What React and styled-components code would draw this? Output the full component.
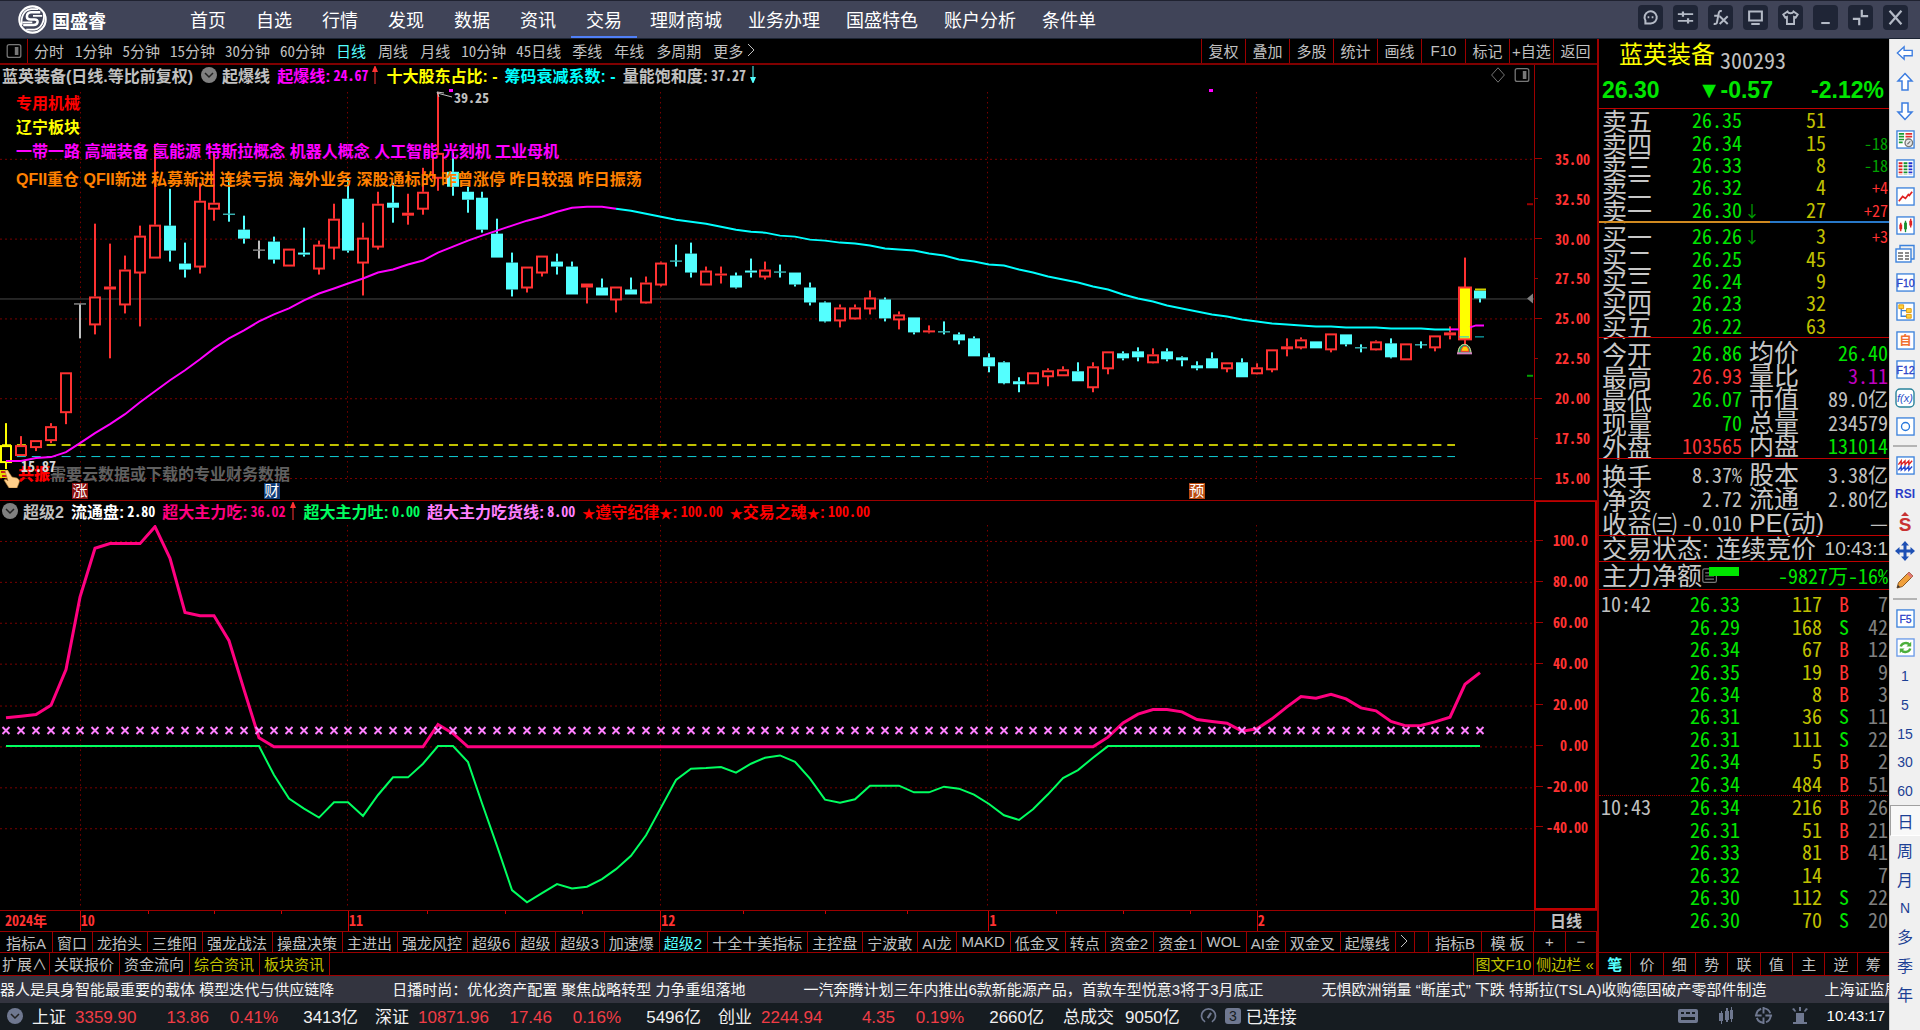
import React, { useState } from 'react';
import styled, { createGlobalStyle, css } from 'styled-components';

const SANS = '"Liberation Sans", "Noto Sans CJK SC", sans-serif';
const NARROW = '"Noto Sans Mono CJK SC", "Noto Sans CJK SC", sans-serif';

const RED_LINE = '#9c0000';
const RED = '#ff3232';
const CYAN = '#54ffff';
const GRAY = '#c0c0c0';
const GREEN = '#00e600';
const AMBER = '#c0c000';

const GlobalStyle = createGlobalStyle`
  * { box-sizing: border-box; }
  body { margin: 0; background: #000; font-family: ${SANS}; overflow: hidden; }
  button { font: inherit; color: inherit; background: none; border: 0; padding: 0; cursor: pointer; white-space: nowrap; }
  svg { display: block; }
`;

/* ---------- data ---------- */

const NAV = ['首页', '自选', '行情', '发现', '数据', '资讯', '交易', '理财商城', '业务办理', '国盛特色', '账户分析', '条件单'];
const PERIODS = ['分时', '1分钟', '5分钟', '15分钟', '30分钟', '60分钟', '日线', '周线', '月线', '10分钟', '45日线', '季线', '年线', '多周期', '更多'];
const TOOLS = ['复权', '叠加', '多股', '统计', '画线', 'F10', '标记', '+自选', '返回'];
const INDICATORS = ['窗口', '龙抬头', '三维阳', '强龙战法', '操盘决策', '主进出', '强龙风控', '超级6', '超级', '超级3', '加速爆', '超级2', '十全十美指标', '主控盘', '宁波敢', 'AI龙', 'MAKD', '低金叉', '转点', '资金2', '资金1', 'WOL', 'AI金', '双金叉', '起爆线'];
const SIDE_TABS = ['笔', '价', '细', '势', '联', '值', '主', '逆', '筹'];

const SELLS = [
  ['卖五', '26.35', '', '51', ''],
  ['卖四', '26.34', '', '15', '-18'],
  ['卖三', '26.33', '', '8', '-18'],
  ['卖二', '26.32', '', '4', '+4'],
  ['卖一', '26.30', '↓', '27', '+27'],
];
const BUYS = [
  ['买一', '26.26', '↓', '3', '+3'],
  ['买二', '26.25', '', '45', ''],
  ['买三', '26.24', '', '9', ''],
  ['买四', '26.23', '', '32', ''],
  ['买五', '26.22', '', '63', ''],
];

const STATS = [
  ['今开', '26.86', GREEN, '均价', '26.40', GREEN],
  ['最高', '26.93', RED, '量比', '3.11', '#c000c0'],
  ['最低', '26.07', GREEN, '市值', '89.0亿', GRAY],
  ['现量', '70', GREEN, '总量', '234579', GRAY],
  ['外盘', '103565', RED, '内盘', '131014', GREEN],
];
const STATS2 = [
  ['换手', '8.37%', GRAY, '股本', '3.38亿', GRAY],
  ['净资', '2.72', GRAY, '流通', '2.80亿', GRAY],
  ['收益㈢', '-0.010', GRAY, 'PE(动)', '—', GRAY],
];

const TRADES = [
  ['10:42', '26.33', 117, 'B', 7], ['', '26.29', 168, 'S', 42], ['', '26.34', 67, 'B', 12],
  ['', '26.35', 19, 'B', 9], ['', '26.34', 8, 'B', 3], ['', '26.31', 36, 'S', 11],
  ['', '26.31', 111, 'S', 22], ['', '26.34', 5, 'B', 2], ['', '26.34', 484, 'B', 51],
  ['10:43', '26.34', 216, 'B', 26], ['', '26.31', 51, 'B', 21], ['', '26.33', 81, 'B', 41],
  ['', '26.32', 14, '', 7], ['', '26.30', 112, 'S', 22], ['', '26.30', 70, 'S', 20],
];

// kind, high, body top, body bottom, low; 48 steps to one yuan, counted down from 33.73
const CANDLES = [
  ['y', 733, 798, 850, 870], ['r', 771, 798, 828, 828], ['r', 784, 784, 805, 815], ['r', 733, 742, 783, 792],
  ['r', 578, 578, 700, 735], ['w', 372, 372, 374, 476], ['r', 133, 352, 434, 465], ['r', 193, 321, 330, 537],
  ['r', 227, 270, 374, 402], ['r', 137, 169, 280, 440], ['r', -107, 135, 235, 235], ['c', 27, 137, 213, 245],
  ['c', 189, 253, 271, 293], ['r', 8, 63, 262, 282], ['r', -85, 68, 86, 122], ['c', -8, 101, 104, 125],
  ['c', 107, 149, 177, 192], ['w', 182, 210, 213, 237], ['c', 170, 185, 240, 251], ['r', 206, 206, 259, 259],
  ['c', 144, 220, 225, 230], ['r', 182, 194, 266, 286], ['r', 73, 116, 205, 241], ['c', -5, 58, 214, 218],
  ['r', 130, 175, 250, 349], ['r', 36, 71, 202, 210], ['c', 8, 69, 83, 129], ['r', 42, 100, 107, 136],
  ['r', -35, 37, 86, 104], ['r', -265, -80, -5, 33], ['c', -80, -24, 20, 48], ['c', 20, 37, 60, 98],
  ['c', 36, 55, 150, 158], ['c', 118, 163, 233, 233], ['c', 219, 250, 329, 352], ['r', 262, 262, 325, 338],
  ['r', 228, 228, 279, 292], ['c', 223, 246, 262, 286], ['c', 246, 262, 345, 345], ['r', 311, 311, 325, 372],
  ['c', 298, 324, 349, 349], ['r', 322, 322, 359, 398], ['c', 294, 329, 345, 345], ['r', 290, 310, 368, 372],
  ['r', 246, 250, 314, 322], ['c', 196, 243, 245, 260], ['c', 189, 223, 278, 293], ['r', 262, 272, 315, 315],
  ['r', 262, 281, 289, 312], ['c', 279, 287, 324, 327], ['c', 238, 273, 278, 294], ['r', 246, 269, 292, 300],
  ['c', 256, 276, 278, 294], ['c', 279, 279, 316, 320], ['c', 310, 324, 368, 377], ['c', 366, 370, 425, 429],
  ['r', 374, 384, 424, 443], ['r', 374, 384, 416, 420], ['r', 332, 355, 386, 406], ['c', 354, 361, 417, 425],
  ['r', 396, 406, 420, 451], ['c', 414, 414, 458, 466], ['r', 437, 454, 458, 462], ['c', 425, 455, 458, 466],
  ['c', 460, 466, 482, 496], ['c', 470, 478, 530, 530], ['c', 523, 534, 560, 578], ['c', 546, 549, 612, 616],
  ['c', 594, 605, 615, 639], ['r', 580, 580, 611, 611], ['r', 568, 573, 592, 620], ['r', 561, 570, 589, 589],
  ['c', 549, 576, 605, 605], ['r', 549, 562, 623, 638], ['r', 517, 517, 567, 586], ['c', 516, 523, 537, 542],
  ['c', 504, 516, 533, 545], ['r', 508, 524, 549, 552], ['c', 508, 516, 541, 545], ['c', 530, 535, 544, 560],
  ['c', 546, 557, 567, 572], ['c', 519, 538, 568, 568], ['r', 550, 550, 566, 578], ['c', 538, 550, 593, 593],
  ['r', 553, 565, 581, 585], ['r', 509, 509, 570, 578], ['r', 478, 502, 510, 530], ['r', 475, 480, 503, 510],
  ['c', 485, 487, 507, 507], ['r', 462, 462, 510, 518], ['c', 466, 466, 496, 500], ['c', 495, 505, 507, 518],
  ['r', 482, 487, 510, 512], ['c', 478, 493, 533, 536], ['r', 491, 491, 540, 540], ['c', 486, 494, 496, 508],
  ['r', 468, 468, 503, 515], ['r', 440, 460, 467, 480], ['hot', 235, 325, 479, 500], ['c', 332, 332, 357, 368],
];

// same scale as the candles
const AVERAGE = [
  847, 845, 838, 833, 818, 792, 762, 735, 704, 670, 637, 604, 573, 539, 507, 478, 452, 427, 404, 386,
  363, 343, 326, 311, 296, 280, 269, 254, 243, 218, 200, 182, 168, 153, 137, 122, 110, 96, 85, 80,
  80, 86, 94, 103, 111, 120, 127, 132, 142, 149, 156, 160, 168, 171, 179, 182, 190, 193, 198, 206,
  209, 212, 221, 228, 239, 247, 255, 258, 269, 279, 291, 299, 309, 320, 330, 346, 358, 366, 378, 386,
  396, 404, 411, 419, 427, 431, 434, 439, 440, 442, 443, 443, 444, 447, 447, 447, 449, 451, 446, 440,
];

const flat = (n, v) => Array(n).fill(v);

const INFLOW = [
  625, 620, 615, 587, 480, 262, 115, 101, 101, 101, 50, 145, 308, 318, 318, 393, 540, 685,
  ...flat(11, 712), 645, 672, ...flat(43, 712),
  683, 640, 614, 600, 600, 607, 630, 636, 641, 665, 658, 628, 592, 561, 566, 554, 568, 595, 604, 636, 649, 648, 637, 623, 524, 489,
];
const OUTFLOW = [
  ...flat(18, 710),
  797, 868, 898, 925, 879, 879, 920, 857, 804, 804, 763, 710, 710, 758, 882, 1010, 1143, 1180, 1152, 1125, 1138, 1133,
  1110, 1080, 1040, 978, 895, 812, 778, 776, 773, 790, 763, 745, 738, 757, 808, 871, 880, 870, 829, 829, 829, 849, 849,
  832, 838, 856, 884, 918, 932, 900, 855, 806, 782, 745,
  ...flat(26, 710),
];

const MONTH_X = [81, 348, 661, 988, 1257];

const xAt = (i) => Math.round(6 + i * 14.89);
const priceY = (v) => Math.round(180 + v / 3);
const flowY = (v) => 510 + v / 3;
const toPoints = (list, fy, from = 0) => list.map((v, i) => `${xAt(i + from)},${fy(v)}`).join(' ');

/* ---------- frame ---------- */

const Page = styled.div`
  min-height: 100vh;
  display: flex;
  flex-direction: column;
  color: ${GRAY};
  background: #000;
`;

const TopBar = styled.header`
  flex: none;
  height: 39px;
  display: flex;
  align-items: center;
  padding: 0 12px 0 17px;
  background: #404458;
  border-top: 1px solid #1f2230;
  border-bottom: 1px solid #1c2433;
  color: #fff;
`;

const Brand = styled.div`
  width: 158px;
  display: flex;
  align-items: center;
  gap: 4px;
  font-size: 18px;
  font-weight: 700;
`;

const Nav = styled.nav`
  flex: 1;
  display: flex;
  align-self: stretch;
`;

const NavItem = styled.button`
  min-width: 66px;
  padding: 0 13px;
  font-size: 18px;
  border-bottom: 2px solid ${(p) => (p.$active ? '#5080f8' : 'transparent')};
`;

const WindowButtons = styled.div`
  display: flex;
  gap: 10px;
  margin-bottom: 4px;
`;

const WindowButton = styled.button`
  width: 25px;
  height: 25px;
  display: grid;
  place-items: center;
  border-radius: 4px;
  background: #1f2536;
  color: #b4bac6;
`;

const Body = styled.div`
  flex: 1;
  display: flex;
  min-height: 0;
`;

const Main = styled.div`
  flex: 1;
  min-width: 0;
  display: flex;
  flex-direction: column;
`;

const Workspace = styled.div`
  flex: 1;
  display: flex;
  min-height: 0;
`;

const ChartColumn = styled.main`
  flex: 1;
  min-width: 0;
  display: flex;
  flex-direction: column;
  border-right: 1px solid ${RED_LINE};
`;

const PeriodBar = styled.div`
  height: 26px;
  display: flex;
  align-items: stretch;
  font-size: 15px;
  border-bottom: 2px solid #800000;
`;

const PanelToggle = styled.button`
  width: 28px;
  display: grid;
  place-items: center;
  color: #777;
  border-right: 1px solid ${RED_LINE};
`;

const Periods = styled.div`
  flex: 1;
  display: flex;
  padding-bottom: 2px;
  font-family: ${NARROW};
`;

const Period = styled.button`
  padding: 0 ${(p) => (p.$tight ? 5 : 6)}px;
  display: flex;
  align-items: center;
  gap: 4px;
  color: ${(p) => (p.$active ? CYAN : GRAY)};
`;

const Tool = styled.button`
  width: 44px;
  padding-bottom: 2px;
  border-left: 1px solid ${RED_LINE};
`;

/* ---------- charts ---------- */

const Pane = styled.section`
  flex: ${(p) => p.$grow} 1 0;
  min-height: 0;
  display: flex;
  border-bottom: 1px solid ${RED_LINE};
`;

const Plot = styled.div`
  flex: 1;
  min-width: 0;
  min-height: 0;
  display: flex;
  flex-direction: column;
`;

const PlotHead = styled.div`
  flex: none;
  height: 24px;
  display: flex;
  align-items: center;
  padding: 0 4px 4px 2px;
  font-size: 16px;
  font-weight: 700;
  white-space: nowrap;
`;

const Reading = styled.span`
  display: inline-flex;
  align-items: center;
  gap: 3px;
  margin-right: 7px;
  color: ${(p) => p.$color || GRAY};

  b { font: 700 14px ${NARROW}; }
`;

const Star = styled.span`
  font-size: 13px;
`;

const HeadButton = styled.button`
  width: 16px;
  height: 16px;
  margin: 0 5px 0 ${(p) => p.$space || 0}px;
  border-radius: 50%;
  background: ${(p) => p.$tone || '#808080'};
  display: grid;
  place-items: center;
`;

const HeadTools = styled.div`
  margin-left: auto;
  display: flex;
  align-items: center;
  gap: 8px;
  color: #777;
`;

const Canvas = styled.div`
  flex: 1;
  min-height: 0;
  position: relative;

  > svg { position: absolute; width: 100%; height: 100%; }
`;

const Tags = styled.div`
  position: absolute;
  left: 16px;
  top: 3px;
  font-size: 16px;
  font-weight: 700;
  line-height: 24px;
  white-space: nowrap;
`;

const Tag = styled.div`
  color: ${(p) => p.$color};
  margin-top: ${(p) => p.$space || 0}px;
`;

const Axis = styled.div`
  width: 63px;
  display: grid;
  grid-template-rows: ${(p) => p.$rows};
  border: 0 solid ${RED_LINE};
  border-left-width: 1px;
  ${(p) => p.$selected && css`border: 2px solid #c00000; border-top-width: 1px;`}
`;

const AxisLabel = styled.div`
  position: relative;
  display: flex;
  align-items: center;
  justify-content: flex-end;
  padding: 0 7px 2px 0;
  font: 700 14px ${NARROW};
  color: ${RED};

  &::before {
    content: '';
    position: absolute;
    left: 0;
    width: ${(p) => (p.$minor ? 3 : 7)}px;
    border-top: 1px solid ${RED_LINE};
  }
`;

const DateRow = styled.div`
  height: 20px;
  display: flex;
  font: 700 14px ${NARROW};
  color: ${RED};
`;

const Month = styled.div`
  position: relative;
  flex: ${(p) => p.$days} 1 0;
  line-height: 19px;
  text-indent: ${(p) => (p.$first ? 5 : 0)}px;
  border-left: ${(p) => (p.$first ? 0 : 1)}px solid #d00000;
`;

const Week = styled.i`
  position: absolute;
  top: 0;
  left: ${(p) => p.$at}%;
  height: 3px;
  border-left: 1px solid #d00000;
`;

const PeriodName = styled.div`
  width: 63px;
  text-align: center;
  line-height: 18px;
  font-size: 16px;
  color: ${GRAY};
  border-left: 1px solid ${RED_LINE};
`;

const TabRow = styled.div`
  height: ${(p) => p.$height}px;
  display: flex;
  font-size: 15px;
  border-top: 1px solid ${RED_LINE};
`;

const Tab = styled.button`
  ${(p) => (p.$width ? css`width: ${p.$width}px; padding: 0 0 2px;` : css`padding: 0 5px 2px 4px;`)}
  color: ${(p) => p.$color || GRAY};
  border-right: 1px solid ${RED_LINE};
`;

const Filler = styled.div`
  flex: 1;
  border-right: 1px solid ${RED_LINE};
`;

/* ---------- quote panel ---------- */

const Quote = styled.aside`
  flex: none;
  width: 291px;
  display: flex;
  flex-direction: column;
  border-left: 1px solid ${RED_LINE};
`;

const QuoteName = styled.div`
  height: 33px;
  display: flex;
  align-items: flex-end;
  gap: 5px;
  padding-left: 20px;
  color: #ff0;
  font-size: 24px;
  line-height: 34px;

  span { font: 22px/26px ${NARROW}; color: ${GRAY}; }
`;

const QuotePrice = styled.div`
  height: 36px;
  display: flex;
  align-items: center;
  justify-content: space-between;
  padding: 0 5px 0 3px;
  font-size: 23px;
  font-weight: 700;
  color: ${GREEN};
`;

const Section = styled.div`
  border-top: ${(p) => (p.$plain ? 0 : 1)}px solid #c00000;
  padding-top: ${(p) => p.$pad || 0}px;
`;

const Grid = styled.table`
  width: 289px;
  height: ${(p) => p.$height}px;
  table-layout: fixed;
  border-collapse: collapse;
  font: 20px/22px ${NARROW};

  th, td { padding: 0; text-align: right; font-weight: 400; white-space: nowrap; line-height: 22px; }
  th { text-align: left; font-size: 25px; padding-left: 3px; color: #c8c8c8; }
`;

const Cell = styled.td`
  color: ${(p) => p.$color};
  ${(p) => p.$small && css`&& { font-size: 16px; }`}
  ${(p) => p.$left && css`&& { text-align: left; padding-left: 2px; }`}
`;

const Row = styled.tr`
  border-bottom: ${(p) => (p.$split ? `1px dotted ${RED_LINE}` : '0')};
`;

const SpreadBar = styled.div`
  height: 2px;
  background: linear-gradient(90deg, #d08a20 59%, #2878c8 59%);
`;

const StateLine = styled.div`
  height: ${(p) => p.$height}px;
  display: flex;
  align-items: center;
  padding: 0 1px 0 3px;
  font-size: 25px;
  line-height: 24px;
  white-space: nowrap;
  color: #c8c8c8;

  span { margin-left: auto; font-size: 19px; }
`;

const NetFlow = styled(StateLine)`
  span { font: 20px/24px ${NARROW}; color: ${GREEN}; }
`;

const NetBar = styled.i`
  width: 30px;
  height: 9px;
  margin: 0 0 8px -9px;
  background: ${GREEN};
`;

const SideTabs = styled.div`
  margin-top: auto;
  height: 23px;
  display: flex;
  border-top: 1px solid ${RED_LINE};
`;

const SideTab = styled.button`
  flex: 1;
  padding-bottom: 2px;
  font-size: 15px;
  font-weight: ${(p) => (p.$active ? 700 : 400)};
  color: ${(p) => (p.$active ? CYAN : GRAY)};
  border-left: 1px solid ${RED_LINE};
  &:first-child { border-left: 0; }
`;

/* ---------- bottom strips and icon rail ---------- */

const Ticker = styled.div`
  flex: none;
  height: 28px;
  display: flex;
  align-items: center;
  gap: 58px;
  padding-bottom: 2px;
  overflow: hidden;
  background: #33343f;
  border-top: 1px solid #a00000;
  color: #f4f4f4;
  font-size: 15px;
  white-space: nowrap;
`;

const StatusBar = styled.footer`
  flex: none;
  height: 27px;
  display: flex;
  align-items: center;
  padding: 0 4px 2px 8px;
  background: #161c21;
  color: #f0f0f0;
  font-size: 17px;
  white-space: nowrap;
`;

const IndexQuote = styled.div`
  width: 326px;
  display: grid;
  grid-template-columns: 34px 1fr auto 69px 80px;
  align-items: baseline;
  text-align: right;
  margin-right: ${(p) => p.$gap || 17}px;

  em { font-style: normal; color: #f03c46; }
  em:nth-child(2) { text-align: left; padding-left: 9px; }
`;

const Turnover = styled.div`
  display: flex;
  align-items: baseline;
  gap: 11px;
  margin-right: 20px;
`;

const Badge = styled.span`
  width: 16px;
  height: 16px;
  margin: 0 5px 0 8px;
  border-radius: 3px;
  background: #6f7890;
  color: #161c21;
  font-size: 14px;
  line-height: 16px;
  text-align: center;
`;

const StatusIcons = styled.div`
  margin-left: auto;
  display: flex;
  align-items: center;
  gap: 18px;
  color: #6f7890;

  time { font-size: 15px; color: #fff; }
`;

const Rail = styled.aside`
  flex: none;
  width: 31px;
  display: flex;
  flex-direction: column;
  padding-bottom: 22px;
  background: #f0f0f0;
  border-left: 1px solid #d0d0d0;
`;

const RailButton = styled.button`
  flex: 1;
  width: 100%;
  min-height: 0;
  display: grid;
  place-items: center;
  font-size: ${(p) => (p.$cjk ? 16 : 14)}px;
  color: #1c3f94;
  ${(p) => p.$active && css`background: #f8f8f8; border: 1px solid #a0a0a0; border-right: 0; border-bottom-color: #fff;`}
`;

const RailLine = styled.div`
  height: 10px;
  padding: 4px 3px;

  &::before { content: ''; display: block; border-top: 2px solid #b4b4b4; }
`;

/* ---------- drawings ---------- */

const Svg = ({ size = 18, children, ...rest }) => (
  <svg width={size} height={size} viewBox="0 0 20 20" fill="none" stroke="currentColor" strokeWidth="2" {...rest}>
    {children}
  </svg>
);

const Logo = () => (
  <svg width="31" height="31" viewBox="0 0 32 32" fill="none" stroke="#fff">
    <circle cx="16" cy="16" r="13.6" strokeWidth="2.2" />
    <path d="M24 8.6H14.5a4.5 4.5 0 0 0-4.3 4.2c0 2.4 1.8 3.2 4 3.2h4c2.2 0 3.4 1 3 2.8-.4 2-2 2.8-4 2.8H6.4" strokeWidth="2.6" />
    <path d="M26 12.2h-9.5M5.8 19h10M27.5 9.5C29 17 25 25.5 18 26.5H9.5M5 21.5C3.6 12 8 6 14.5 5.4H22" strokeWidth="1.8" />
  </svg>
);

const WINDOW_ICONS = {
  消息: <><path d="M4 17v-3.500A7.200 7.200 0 1 1 10 17z" strokeWidth="2.400" /><path d="M7.600 8.500v2.500M12.400 8.500v2.500" /></>,
  布局: <><path d="M1 6h18M1 14h18" strokeWidth="2.200" /><path d="M7 3v6M13 11v6" strokeWidth="2.600" /></>,
  公式: <><path d="M11.500 2.600C8.500 1.600 8 4 7.500 7L6 15c-.4 2.400-1.600 3-4 2.400M2.600 8H9" strokeWidth="2.300" /><path d="M9 8.600 18.500 17.600M18.500 8.600 9 17.600" strokeWidth="2.300" /></>,
  屏幕: <><path d="M2.500 3h15v10.500h-15z" strokeWidth="2.400" /><path d="M5 17.600h10" strokeWidth="2.400" /></>,
  皮肤: <path d="M6.500 3 1.500 6.400l2.300 3.600 2-.8v8.400h8.400V9.200l2 .8 2.300-3.600L13.500 3c-1 2.600-6 2.600-7 0z" strokeWidth="2.200" />,
  最小化: <path d="M5 16.500h10" strokeWidth="2.400" />,
  还原: <path d="M11.500 1v7.500H19M1 11.500h7.500V19" strokeWidth="2.600" />,
  关闭: <path d="M3 2 17 18M17 2 3 18" strokeWidth="2.600" />,
};

const PanelIcon = () => (
  <Svg size={16} strokeWidth="1.6">
    <rect x="1.500" y="2" width="17" height="16" rx="2.500" />
    <path d="M11 5v10h4.500V5z" fill="currentColor" stroke="none" />
  </Svg>
);

const Chevron = () => (
  <svg width="10" height="8" viewBox="0 0 10 8" fill="none" stroke="#222" strokeWidth="1.5"><path d="m1 2 4 4 4-4" /></svg>
);

const Arrow = ({ down }) => (
  <svg width="8" height="18" viewBox="0 0 8 18">
    {down
      ? <path d="M3.500 0h1v11H7L4.500 17h-1L1 11h2.500z" fill={CYAN} />
      : <path d="M3.500 18h1V6H7L4.500 0h-1L1 6h2.500z" fill={RED} />}
  </svg>
);

const Framed = ({ children, color = '#3c82dc' }) => (
  <Svg size={19} strokeWidth="1.4">
    <rect x="1" y="1" width="18" height="18" fill="#fff" stroke={color} />
    {children}
  </Svg>
);

const FramedText = ({ text }) => (
  <Framed><text x="10" y="14.500" textAnchor="middle" fontSize="11" fontFamily="Liberation Sans" fill="#2a3fc8" stroke="#2a3fc8" strokeWidth=".3">{text}</text></Framed>
);

const arrowPath = 'M10 1.500 17 9h-4v9H7V9H3z';

const RAIL_ICONS = [
  ['后退', <Svg stroke="#3c7de0" strokeWidth="1.5"><path d={arrowPath} fill="#fff" transform="rotate(-90 10 10)" /></Svg>],
  ['上一只', <Svg size={20} stroke="#3c7de0" strokeWidth="1.5"><path d={arrowPath} fill="#fff" /></Svg>],
  ['下一只', <Svg size={20} stroke="#3c7de0" strokeWidth="1.5"><path d={arrowPath} fill="#fff" transform="rotate(180 10 10)" /></Svg>],
  ['报价设置', <Framed><path d="M3 4h5.500M3 7h5.500M3 10h5.500M3 13h4" stroke="#1a9a30" strokeWidth="1.800" /><path d="M10 4h7M10 7h7M10 10h3" stroke="#e03030" strokeWidth="1.800" /><circle cx="13.500" cy="13.500" r="4" fill="#e8e8e8" stroke="#777" /><path d="m12 15 3-3" stroke="#777" /></Framed>],
  ['报价列表', <Framed><g strokeDasharray="2 1.200" strokeWidth="4"><path d="M4.800 3.500v13" stroke="#e02020" /><path d="M10 3.500v13" stroke="#189030" /><path d="M15.200 3.500v13" stroke="#2030d0" /></g></Framed>],
  ['分时图', <Framed><path d="m3 15 4-5 3 2 3-4 1 1 3-4" stroke="#e02020" strokeWidth="1.800" /></Framed>],
  ['K线图', <Framed><path d="M5 7v9M15.500 3v9" stroke="#e02020" /><path d="M10 5v12" stroke="#189030" /><path d="M3.500 9h3v5h-3zM14 5h3v5h-3z" fill="#e02020" stroke="none" /><path d="M8.500 7h3v7h-3z" fill="#189030" stroke="none" /></Framed>],
  ['资讯', <Svg size={20} stroke="#3c82dc" strokeWidth="1.400"><path d="M5 5V1.500h14V15h-3" /><rect x="1" y="5" width="15" height="13" fill="#fff" /><path d="M3 9h5M3 12h5M3 15h5M10 9h4M10 12h4M10 15h4" stroke="#666" /></Svg>],
  ['F10', <FramedText text="F10" />],
  ['板块树', <Framed><path d="M5.500 6v9h6M5.500 9h6" stroke="#3c82dc" /><path d="M3 3h5v4H3zM11 7h5v4h-5zM11 13h5v4h-5z" fill="#ffd23c" stroke="#e09a10" strokeWidth="1" /></Framed>],
  ['自选', <Framed><text x="10" y="15" textAnchor="middle" fontSize="13" fontWeight="700" fontFamily="Noto Sans CJK SC" fill="#f07030" stroke="none">自</text></Framed>],
  ['F12', <FramedText text="F12" />],
  ['公式', <Svg size={20} strokeWidth="1.4"><rect x="1" y="1" width="18" height="18" rx="4" fill="#fff" stroke="#28829a" /><text x="10" y="14" textAnchor="middle" fontSize="11" fontStyle="italic" fontFamily="Liberation Sans" fill="#2a50c8" stroke="none">f(x)</text></Svg>],
  ['圈', <Framed><circle cx="10" cy="10" r="4.200" stroke="#2878dc" /></Framed>],
  null,
  ['指标', <Framed><path d="m2.500 9 3-4v4l4-4v4l4-4v4l3.500-4" stroke="#e02020" /><path d="m2.500 15 3-4v4l4-4v4l4-4v4l3.500-4" stroke="#2848d0" /></Framed>],
  ['RSI', <svg width="27" height="18" viewBox="0 0 27 18"><text x="13" y="13" textAnchor="middle" fontSize="12" fontWeight="700" fontFamily="Liberation Sans" fill="#2a3cc8">RSI</text></svg>],
  ['资金', <svg width="18" height="22" viewBox="0 0 18 22"><text x="9" y="19" textAnchor="middle" fontSize="19" fontWeight="700" fontFamily="Liberation Sans" fill="#c83232">S</text><path d="m9 0 4 4H5z" fill="#c83232" /></svg>],
  ['移动', <svg width="20" height="20" viewBox="0 0 20 20" fill="#1e50b4"><path d="m10 0 4 4.500h-2.500v4h4V6l4.500 4-4.500 4v-2.500h-4v4H14L10 20l-4-4.500h2.500v-4h-4V14L0 10l4.500-4v2.500h4v-4H6z" /></svg>],
  ['画线', <svg width="20" height="20" viewBox="0 0 20 20"><path d="m2 18 1.500-5.500L14 2l4 4L7.500 16.500z" fill="#f0a03c" stroke="#8a5a28" /><path d="m14 2 4 4-2 2-4-4z" fill="#e07878" /><path d="m2 18 1-3 2 2z" fill="#333" /></svg>],
  null,
  ['F5', <FramedText text="F5" />],
  ['刷新', <Framed color="#6a9ae8"><path d="M5 9c1-4 7-5 9-2M15 11c-1 4-7 5-9 2" stroke="#4caf3c" strokeWidth="2.600" /><path d="M16 4v5h-5zM4 16v-5h5z" fill="#4caf3c" stroke="none" /></Framed>],
];
const RAIL_PERIODS = ['1', '5', '15', '30', '60', '日', '周', '月', 'N', '多', '季', '年'];

const Candle = ({ kind, x, high, top, bottom, low }) => {
  const color = { r: RED, c: CYAN, w: GRAY, y: '#ff0', hot: RED }[kind];
  const h = Math.max(bottom - top, 1);
  const hollow = kind === 'r' && h > 4;
  return (
    <g>
      {high < top && <rect x={x - 1} y={high} width="2" height={top - high} fill={color} />}
      {low > bottom && <rect x={x - 1} y={bottom} width="2" height={low - bottom} fill={color} />}
      {hollow || kind === 'y'
        ? <rect x={x - 5} y={top + 1} width="10" height={h - 1} fill="#000" stroke={color} strokeWidth="2" />
        : <rect x={x - 6} y={top} width="12" height={h} fill={kind === 'hot' ? '#ff0' : color} stroke={kind === 'hot' ? RED : 'none'} strokeWidth="2" />}
    </g>
  );
};

const PriceChart = () => (
  <svg viewBox="0 89 1534 412" preserveAspectRatio="none">
    <g stroke="#7a0000" strokeDasharray="2 3">
      {[159.5, 239.5, 319.5, 399.5, 479.5].map((y) => <path key={y} d={`M0 ${y}H1534`} />)}
      {MONTH_X.map((x) => <path key={x} d={`M${x - 0.5} 92V483`} strokeDasharray="1.500 3.500" />)}
    </g>
    <path d="M0 299.500H1534" stroke="#484848" />
    <path d="m1527 299 6-5v10z" fill="#808080" />
    <path d="M1527 204.500h6" stroke={RED_LINE} strokeWidth="2" />
    <path d="M1527 376.500h6" stroke="#00a000" strokeWidth="2" />
    <path d="M2 446H1455" stroke={AMBER} strokeWidth="2" strokeDasharray="9 5.900" />
    <path d="M2 457.500H1455" stroke="#10d0d8" strokeDasharray="9 5.900" />
    <path d="M1475 337.500h9" stroke="#10d0d8" />

    {CANDLES.map(([kind, high, top, bottom, low], i) => (
      <Candle key={i} kind={kind} x={xAt(i)} high={priceY(high)} top={priceY(top)} bottom={priceY(bottom)} low={priceY(low)} />
    ))}
    <path d="M1475 290h11" stroke="#d0d000" strokeWidth="2" />
    <path d="M1459 337.500h10" stroke="#10d0d8" />

    <g fill="none" strokeWidth="2">
      <polyline points={toPoints(AVERAGE.slice(0, 42), priceY)} stroke="#f0f" />
      <polyline points={toPoints(AVERAGE.slice(41, 98), priceY, 41)} stroke="#0ff" />
      <polyline points="1450,330 1459,330" stroke="#f0f" />
      <polyline points="1470,328 1476,326 1484,326" stroke="#f0f" />
    </g>
    <path d="M449 88h4v4h-4zM1209 88h4v4h-4z" fill="#f0f" />
    <path d="M452 97 437 93m7 0-7-1 2 5" stroke={GRAY} fill="none" />
    <g fill={GRAY} fontSize="14" fontWeight="700" fontFamily={NARROW.replaceAll('"', "'")}>
      <text x="454" y="103">39.25</text>
    </g>
    {/* alarm light under the breakout candle */}
    <path d="M1458 354c0-12 13-12 13 0z" fill="#20a060" stroke="#e8e0a0" />
    <path d="M1461 352c1-7 7-7 8 0z" fill="#ffd000" stroke={RED} />
    <path d="M1457 354h15" stroke="#d080c0" strokeWidth="2" />
  </svg>
);

const CornerNote = styled.div`
  position: absolute;
  left: 18px;
  top: 374px;
  font-size: 16px;
  font-weight: 700;
  line-height: 24px;
  white-space: nowrap;
  color: #606060;

  b { color: #f00; }
`;

const LowPrice = styled.div`
  position: absolute;
  left: 21px;
  top: 369px;
  font: 700 14px/16px ${NARROW};
  color: #d8d8d8;
`;

const Hand = styled.div`
  position: absolute;
  left: 0;
  top: 379px;
`;

const Event = styled.button`
  position: absolute;
  bottom: 1px;
  left: ${(p) => p.$at}%;
  width: 16px;
  height: 16px;
  background: ${(p) => p.$color};
  color: #fff;
  font-size: 15px;
  line-height: 15px;
`;

const FlowChart = () => (
  <svg viewBox="0 525 1534 386" preserveAspectRatio="none">
    <g stroke="#7a0000" strokeDasharray="2 3">
      {[541, 582, 623, 664, 706, 747, 788, 829].map((y) => <path key={y} d={`M0 ${y + 0.5}H1534`} />)}
      {MONTH_X.map((x) => <path key={x} d={`M${x - 0.5} 525V907`} strokeDasharray="1.500 3.500" />)}
    </g>
    <polyline points={toPoints(INFLOW, flowY)} fill="none" stroke="#ff0080" strokeWidth="3" />
    <polyline points={toPoints(OUTFLOW, flowY)} fill="none" stroke="#00ff60" strokeWidth="2" />
    {INFLOW.map((_, i) => (
      <path key={i} d={`M${xAt(i) - 3.5} 727.500l7 7m0-7-7 7`} stroke="#ff80ff" strokeWidth="2" />
    ))}
  </svg>
);

/* ---------- composed parts ---------- */

const OrderBook = ({ rows, label }) => (
  <Grid $height={112} aria-label={label}>
    <colgroup><col width="60" /><col width="83" /><col width="18" /><col width="66" /><col width="62" /></colgroup>
    <tbody>
      {rows.map(([name, price, mark, volume, diff]) => (
        <tr key={name}>
          <th scope="row">{name}</th>
          <Cell $color={GREEN}>{price}</Cell>
          <Cell $color="#00a000" $small>{mark}</Cell>
          <Cell $color={AMBER}>{volume}</Cell>
          <Cell $color={diff.startsWith('+') ? RED : '#00a000'} $small>{diff}</Cell>
        </tr>
      ))}
    </tbody>
  </Grid>
);

const StatTable = ({ rows, height, label }) => (
  <Grid $height={height} aria-label={label}>
    <colgroup><col width="80" /><col width="63" /><col width="78" /><col width="68" /></colgroup>
    <tbody>
      {rows.map(([a, av, ac, b, bv, bc]) => (
        <tr key={a}>
          <th scope="row">{a}</th>
          <Cell $color={ac}>{av}</Cell>
          <SecondName scope="row">{b}</SecondName>
          <Cell $color={bc}>{bv}</Cell>
        </tr>
      ))}
    </tbody>
  </Grid>
);

const SecondName = styled.th`
  && { padding-left: 7px; font-family: ${SANS}; }
`;

const QuotePanel = () => (
  <Quote>
    <QuoteName>蓝英装备<span>300293</span></QuoteName>
    <QuotePrice><span>26.30</span><span>▼-0.57</span><span>-2.12%</span></QuotePrice>
    <Section><OrderBook rows={SELLS} label="卖盘" /></Section>
    <SpreadBar />
    <Section $plain $pad={2}><OrderBook rows={BUYS} label="买盘" /></Section>
    <Section $pad={3}><StatTable rows={STATS} height={117} label="行情" /></Section>
    <Section $pad={4}><StatTable rows={STATS2} height={72} label="基本面" /></Section>
    <Section><StateLine $height={25}>交易状态: 连续竞价 <span>10:43:1</span></StateLine></Section>
    <Section>
      <NetFlow $height={27}>
        主力净额
        <Svg size={16} strokeWidth="1.500" stroke="#777"><rect x="1" y="1" width="17" height="17" rx="2" /><path d="M4 6h11M4 10h11M4 14h11" /></Svg>
        <NetBar />
        <span>-9827万-16%</span>
      </NetFlow>
    </Section>
    <Section $pad={3}>
      <Grid $height={338} aria-label="成交明细">
        <colgroup><col width="60" /><col width="81" /><col width="82" /><col width="27" /><col width="39" /></colgroup>
        <tbody>
          {TRADES.map(([time, price, volume, side, count], i) => (
            <Row key={i} $split={i === 8}>
              <Cell $left $color={GRAY}>{time}</Cell>
              <Cell $color={GREEN}>{price}</Cell>
              <Cell $color={AMBER}>{volume}</Cell>
              <Cell $color={side === 'B' ? RED : GREEN}>{side}</Cell>
              <Cell $color="#808080">{count}</Cell>
            </Row>
          ))}
        </tbody>
      </Grid>
    </Section>
    <SideTabs>
      {SIDE_TABS.map((t, i) => <SideTab key={t} $active={i === 0}>{t}</SideTab>)}
    </SideTabs>
  </Quote>
);

const IndexItem = ({ name, value, change, percent, amount, ...rest }) => (
  <IndexQuote {...rest}>
    <span>{name}</span><em>{value}</em><em>{change}</em><em>{percent}</em><span>{amount}</span>
  </IndexQuote>
);

const App = () => {
  const [nav, setNav] = useState('交易');
  const [period, setPeriod] = useState('日线');
  const [indicator, setIndicator] = useState('超级2');

  return (
    <Page>
      <GlobalStyle />
      <TopBar>
        <Brand><Logo />国盛睿</Brand>
        <Nav>
          {NAV.map((n) => <NavItem key={n} $active={n === nav} onClick={() => setNav(n)}>{n}</NavItem>)}
        </Nav>
        <WindowButtons>
          {Object.entries(WINDOW_ICONS).map(([name, icon]) => (
            <WindowButton key={name} aria-label={name}><Svg size={17}>{icon}</Svg></WindowButton>
          ))}
        </WindowButtons>
      </TopBar>

      <Body>
        <Main>
          <Workspace>
            <ChartColumn>
              <PeriodBar>
                <PanelToggle aria-label="侧栏"><PanelIcon /></PanelToggle>
                <Periods>
                  {PERIODS.map((p) => (
                    <Period key={p} $active={p === period} $tight={/\d/.test(p)} onClick={() => setPeriod(p)}>
                      {p}
                      {p === '更多' && <svg width="8" height="12" viewBox="0 0 8 12" fill="none" stroke="currentColor"><path d="m1 0 6 6-6 6" /></svg>}
                    </Period>
                  ))}
                </Periods>
                {TOOLS.map((t) => <Tool key={t}>{t}</Tool>)}
              </PeriodBar>

              <Pane $grow={436}>
                <Plot>
                  <PlotHead>
                    <span>蓝英装备(日线.等比前复权)</span>
                    <HeadButton $space={8} aria-label="展开"><Chevron /></HeadButton>
                    <Reading>起爆线</Reading>
                    <Reading $color="#f0f">起爆线: <b>24.67</b><Arrow /></Reading>
                    <Reading $color="#ff0">十大股东占比: -</Reading>
                    <Reading $color="#0ff">筹码衰减系数: -</Reading>
                    <Reading>量能饱和度: <b>37.27</b><Arrow down /></Reading>
                    <HeadTools>
                      <Svg size={16} strokeWidth="1.200"><path d="m10 1 8 9-8 9-8-9z" /></Svg>
                      <PanelIcon />
                    </HeadTools>
                  </PlotHead>
                  <Canvas>
                    <PriceChart />
                    <Tags>
                      <Tag $color="#f00">专用机械</Tag>
                      <Tag $color="#ff0">辽宁板块</Tag>
                      <Tag $color="#f0f">一带一路 高端装备 氢能源 特斯拉概念 机器人概念 人工智能 光刻机 工业母机</Tag>
                      <Tag $color="#ff8000" $space={4}>QFII重仓 QFII新进 私募新进 连续亏损 海外业务 深股通标的 昨曾涨停 昨日较强 昨日振荡</Tag>
                    </Tags>
                    <CornerNote><b>共振</b>需要云数据或下载的专业财务数据</CornerNote>
                    <LowPrice>15.87</LowPrice>
                    <Hand>
                      <svg width="20" height="20" viewBox="0 0 20 20">
                        <path d="M0 2h8l2 8H0z" fill="#e8d800" /><path d="M1 4h5M2 8h5" stroke="#d02020" strokeWidth="2" />
                        <path d="M5 3c1-1 2-1 3 0l4 6 5 1c2 1 3 3 2 5l-2 5H9l-5-8c2-1 3 0 4 1z" fill="#ffcf8a" stroke="#b07830" strokeWidth=".6" />
                      </svg>
                    </Hand>
                    <Event $at={4.7} $color="#8b1010">涨</Event>
                    <Event $at={17.2} $color="#103c78">财</Event>
                    <Event $at={77.5} $color="#b84a10">预</Event>
                  </Canvas>
                </Plot>
                <Axis $rows="75fr repeat(9, 40fr) 1fr">
                  <i />
                  {['35.00', '32.50', '30.00', '27.50', '25.00', '22.50', '20.00', '17.50', '15.00'].map((v, i) => (
                    <AxisLabel key={v} $minor={i % 2 === 1}>{v}</AxisLabel>
                  ))}
                </Axis>
              </Pane>

              <Pane $grow={410}>
                <Plot>
                  <PlotHead>
                    <HeadButton aria-label="展开"><Chevron /></HeadButton>
                    <Reading>超级2</Reading>
                    <Reading $color="#fff">流通盘: <b>2.80</b></Reading>
                    <Reading $color="#ff0080">超大主力吃: <b>36.02</b><Arrow /></Reading>
                    <Reading $color="#00ff60">超大主力吐: <b>0.00</b></Reading>
                    <Reading $color="#ff80ff">超大主力吃货线: <b>8.00</b></Reading>
                    {['遵守纪律', '交易之魂'].map((name) => (
                      <Reading key={name} $color="#f00">
                        <span><Star>★</Star>{name}<Star>★</Star>:</span> <b>100.00</b>
                      </Reading>
                    ))}
                  </PlotHead>
                  <Canvas><FlowChart /></Canvas>
                </Plot>
                <Axis $selected $rows="76fr repeat(8, 165fr) 240fr">
                  <i />
                  {['100.0', '80.00', '60.00', '40.00', '20.00', '0.00', '-20.00', '-40.00'].map((v) => (
                    <AxisLabel key={v}>{v}</AxisLabel>
                  ))}
                </Axis>
              </Pane>

              <DateRow>
                <Month $days={80} $first>2024年</Month>
                {[['10', 268], ['11', 312], ['12', 328], ['1', 268], ['2', 277]].map(([m, days]) => (
                  <Month key={m} $days={days}>
                    {m}
                    {m !== '2' && [25, 50, 75].map((at) => <Week key={at} $at={at} />)}
                  </Month>
                ))}
                <PeriodName>日线</PeriodName>
              </DateRow>

              <TabRow $height={21}>
                <Tab $width={53}>指标A</Tab>
                {INDICATORS.map((t) => (
                  <Tab key={t} $color={t === indicator ? CYAN : undefined} onClick={() => setIndicator(t)}>{t}</Tab>
                ))}
                <Tab $width={19} aria-label="更多指标">
                  <svg width="17" height="12" viewBox="0 0 17 12" fill="none" stroke="currentColor"><path d="m5 0 6 6-6 6" /></svg>
                </Tab>
                <Filler />
                <Tab $width={53}>指标B</Tab>
                <Tab $width={52}>模 板</Tab>
                <Tab $width={32}>+</Tab>
                <Tab $width={31}>−</Tab>
              </TabRow>
              <TabRow $height={23}>
                <Tab $width={50}>扩展∧</Tab>
                <Tab>关联报价</Tab>
                <Tab>资金流向</Tab>
                <Tab $color={AMBER}>综合资讯</Tab>
                <Tab $color={AMBER}>板块资讯</Tab>
                <Filler />
                <Tab $width={60} $color={AMBER}>图文F10</Tab>
                <Tab $width={63} $color={AMBER}>侧边栏 «</Tab>
              </TabRow>
            </ChartColumn>
            <QuotePanel />
          </Workspace>

          <Ticker>
            <span>器人是具身智能最重要的载体 模型迭代与供应链降</span>
            <span>日播时尚：优化资产配置 聚焦战略转型 力争重组落地</span>
            <span>一汽奔腾计划三年内推出6款新能源产品，首款车型悦意3将于3月底正</span>
            <span>无惧欧洲销量 “断崖式” 下跌 特斯拉(TSLA)收购德国破产零部件制造</span>
            <span>上海证监局</span>
          </Ticker>
          <StatusBar>
            <HeadButton $tone="#6f7890" $space={-1} aria-label="切换"><Chevron /></HeadButton>
            <Indent />
            <IndexItem name="上证" value="3359.90" change="13.86" percent="0.41%" amount="3413亿" />
            <IndexItem name="深证" value="10871.96" change="17.46" percent="0.16%" amount="5496亿" />
            <IndexItem $gap={19} name="创业" value="2244.94" change="4.35" percent="0.19%" amount="2660亿" />
            <Turnover><span>总成交</span><span>9050亿</span></Turnover>
            <Svg size={17} color="#6f7890"><path d="M6 17.500a8.200 8.200 0 1 1 8 0" /><path d="m9 13 4-6" strokeWidth="2.600" /></Svg>
            <Badge>3</Badge>
            <span>已连接</span>
            <StatusIcons>
              <svg width="20" height="14" viewBox="0 0 20 14" fill="currentColor"><path fillRule="evenodd" d="M2 0h16a2 2 0 0 1 2 2v10a2 2 0 0 1-2 2H2a2 2 0 0 1-2-2V2a2 2 0 0 1 2-2zm1 3v2h3V3zm5 0v2h4V3zm6 0v2h3V3zM3 8v3h14V8z" /></svg>
              <svg width="20" height="18" viewBox="0 0 20 18" fill="currentColor"><path d="M3 6h4v8H3zM9 4h4v9H9zM14 3h3v9h-3zM5 4h1v13H5zM10 1h2v14h-2zM15 0h1v15h-1z" /></svg>
              <Svg size={19}><circle cx="10" cy="10" r="7.500" strokeDasharray="9 2.800" /><path d="M10 1v7m0 4v7M1 10h7m4 0h7" /></Svg>
              <svg width="18" height="18" viewBox="0 0 18 18" fill="currentColor"><path d="M5 6h8v9h3v2H2v-2h3zM8 0h2v4H8zM1 2l2-1 2 3-1 1zM17 2l-2-1-2 3 1 1z" /></svg>
              <time>10:43:17</time>
            </StatusIcons>
          </StatusBar>
        </Main>

        <Rail>
          {RAIL_ICONS.map((item, i) => (
            item ? <RailButton key={i} aria-label={item[0]}>{item[1]}</RailButton> : <RailLine key={i} />
          ))}
          {RAIL_PERIODS.map((p) => (
            <RailButton key={p} $active={p === '日'} $cjk={/[^\dN]/.test(p)}>{p}</RailButton>
          ))}
        </Rail>
      </Body>
    </Page>
  );
};

const Indent = styled.span`
  width: 4px;
`;

export default App;
